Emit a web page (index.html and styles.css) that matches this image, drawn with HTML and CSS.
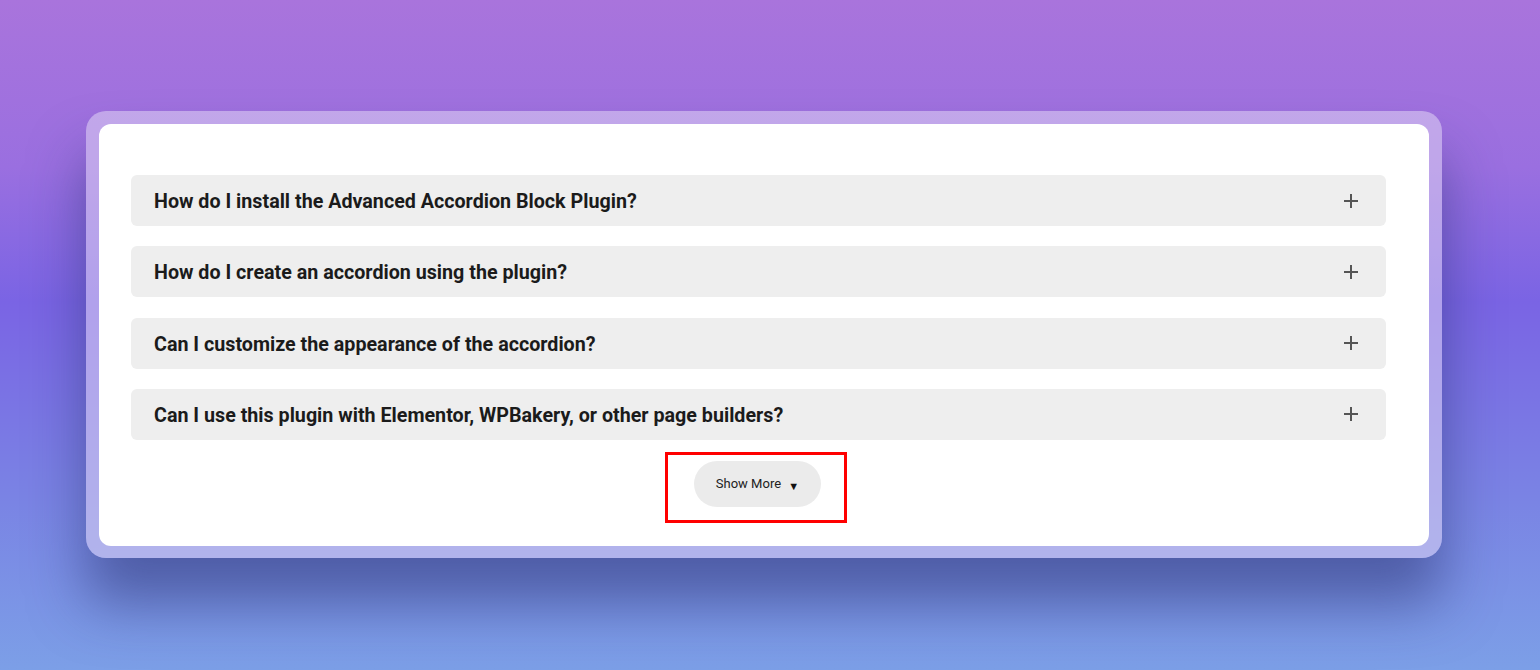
FILE: index.html
```html
<!DOCTYPE html>
<html lang="en">
<head>
  <meta charset="UTF-8">
  <title>FAQ Accordion</title>
  <meta name="viewport" content="width=device-width, initial-scale=1.0">
  <link rel="stylesheet" href="styles.css">
</head>
<body>

  <div class="frame">
    <div class="card">

      <div class="accordion">
        <div class="acc-item">
          <span class="acc-title">How do I install the Advanced Accordion Block Plugin?</span>
          <span class="acc-icon"></span>
        </div>
        <div class="acc-item">
          <span class="acc-title">How do I create an accordion using the plugin?</span>
          <span class="acc-icon"></span>
        </div>
        <div class="acc-item">
          <span class="acc-title">Can I customize the appearance of the accordion?</span>
          <span class="acc-icon"></span>
        </div>
        <div class="acc-item">
          <span class="acc-title">Can I use this plugin with Elementor, WPBakery, or other page builders?</span>
          <span class="acc-icon"></span>
        </div>
      </div>

      <!-- highlighted button -->
      <div class="more-wrap">
        <div class="highlight">
          <button type="button" class="show-more">Show More <span class="caret">&#9660;</span></button>
        </div>
      </div>

    </div>
  </div>

</body>
</html>
```

FILE: styles.css
```css
html, body {
  height: 100%;
}
body {
  margin: 0;
  padding: 111px 0 0 86px;
  box-sizing: border-box;
  font-family: Roboto, "Liberation Sans", sans-serif;
  background: linear-gradient(180deg, #a974dc 0%, #9a6fe0 25%, #7a64e4 45%, #7a84e4 75%, #7c9fe7 100%);
  overflow: hidden;
}
.frame {
  width: 1356px;
  box-sizing: border-box;
  padding: 13px 13px 12px 13px;
  border-radius: 20px;
  background: rgba(222, 212, 242, 0.55);
  box-shadow: 0 45px 55px rgba(35, 45, 105, 0.5);
}
.card {
  background-color: #ffffff;
  border-radius: 12px;
  padding: 51px 43px 23px 32px;
}
.accordion {
  display: flex;
  flex-direction: column;
  gap: 20.3px;
}
.acc-item {
  height: 51px;
  background-color: #eeeeee;
  border-radius: 6px;
  display: flex;
  align-items: center;
  justify-content: space-between;
  padding: 0 28px 0 23px;
}
.acc-title {
  font-size: 19.7px;
  font-weight: 700;
  color: #1b1b1b;
  position: relative;
  top: 1px;
}
.acc-icon {
  position: relative;
  width: 14px;
  height: 14px;
}
.acc-icon::before,
.acc-icon::after {
  content: "";
  position: absolute;
  background-color: #555;
}
.acc-icon::before {
  left: 0;
  top: 6px;
  width: 14px;
  height: 2px;
}
.acc-icon::after {
  left: 6px;
  top: 0;
  width: 2px;
  height: 14px;
}
.more-wrap {
  display: flex;
  justify-content: center;
  margin-top: 12px;
  padding-right: 5px;
}
.highlight {
  width: 182px;
  height: 71px;
  box-sizing: border-box;
  border: 3px solid #ff0000;
  display: flex;
  justify-content: center;
  padding-top: 6px;
}
.show-more {
  width: 127px;
  height: 46px;
  border: none;
  border-radius: 23px;
  background-color: #ebebeb;
  font-family: Roboto, "Liberation Sans", sans-serif;
  font-size: 13px;
  color: #222;
  cursor: pointer;
  padding: 0 0 0 0;
  margin-left: 3px;
}
.caret {
  font-size: 11px;
  margin-left: 4px;
  position: relative;
  top: 2px;
  color: #111;
}
```
